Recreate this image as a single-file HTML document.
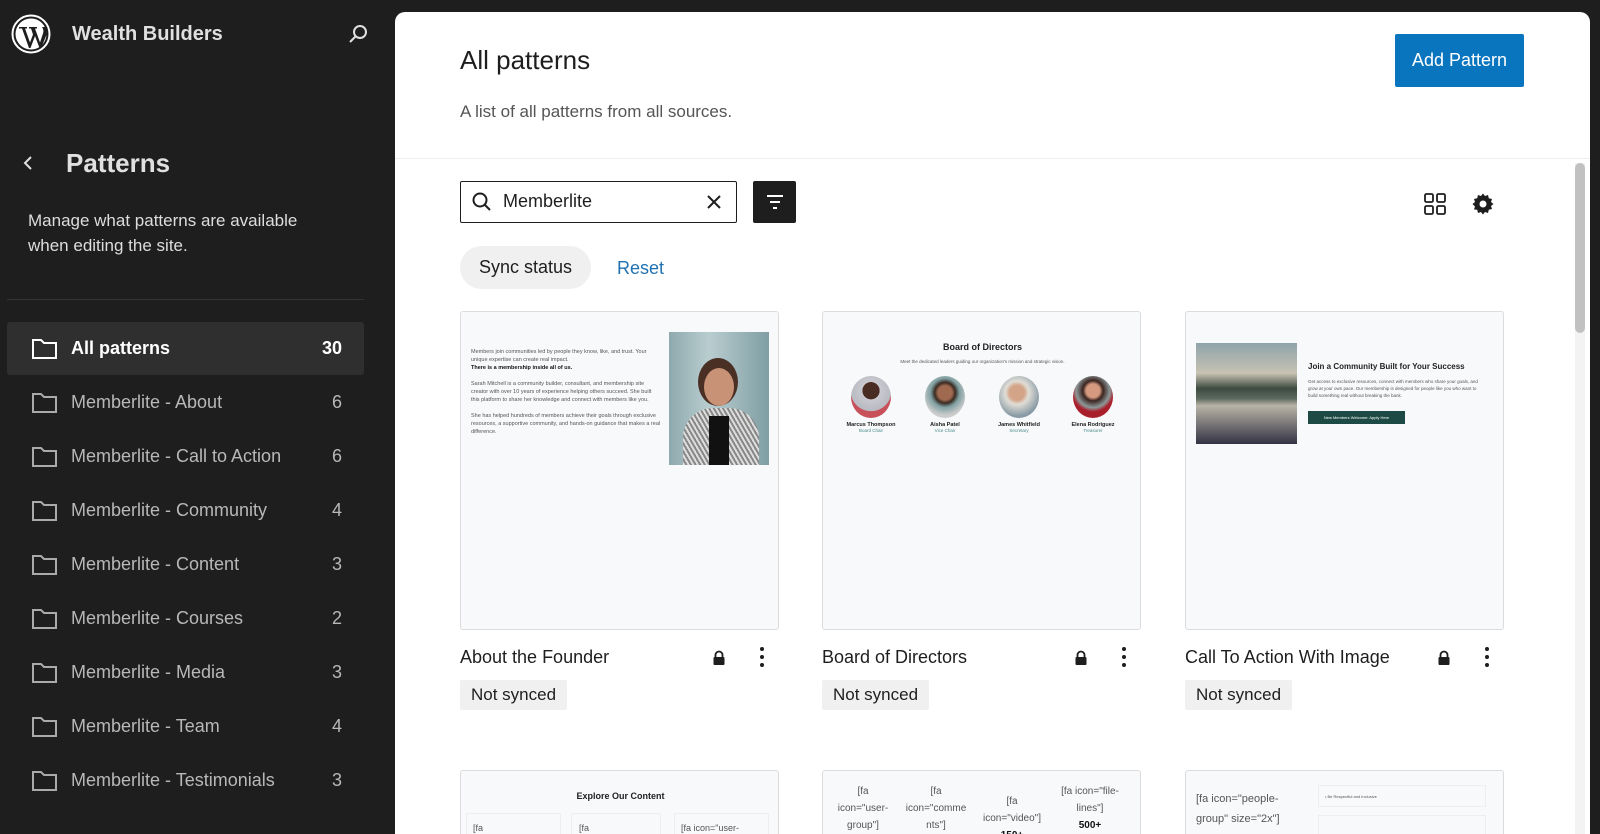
<!DOCTYPE html>
<html><head><meta charset="utf-8"><style>
*{box-sizing:border-box;margin:0;padding:0}
html,body{width:1600px;height:834px;overflow:hidden}
body{background:#1e1e1e;font-family:"Liberation Sans",sans-serif;position:relative}
.a{position:absolute}
.side{color:#e0e0e0}
.item{position:absolute;left:7px;width:357px;height:53px;border-radius:3px;display:flex;align-items:center;color:#b8b8b8;font-size:18px}
.item svg{position:absolute;left:24px}
.item .t{position:absolute;left:64px}
.item .c{position:absolute;right:22px}
.item.on{background:#2f2f2f;color:#fff;font-weight:bold}
.main{position:absolute;left:395px;top:12px;width:1195px;height:822px;background:#fff;border-radius:10px 10px 0 0;overflow:hidden}
.card{position:absolute;width:319px;height:319px;background:#f8f9fb;border:1px solid #dcdcde;border-radius:3px;overflow:hidden}
.card.r2{height:64px;border-bottom:none;border-radius:3px 3px 0 0}
.ttl{position:absolute;font-size:18px;color:#1e1e1e}
.pill{position:absolute;height:30px;background:#f0f0f0;border-radius:2px;font-size:17px;color:#1e1e1e;padding:0 11px;line-height:30px}
.tiny{font-size:5px;color:#555;line-height:8px}
</style></head><body>
<svg class="a" style="left:11px;top:14px" width="40" height="40" viewBox="0 0 40 40"><circle cx="20" cy="20" r="18.5" fill="none" stroke="#fff" stroke-width="2"/><circle cx="20" cy="20" r="15.5" fill="#fff"/><path d="M8 13h8v1.5h-2l5 14 3-8-2-6h-2V13h8v1.5h-2l5 14 3-9c1-3 0-5-1-6.5h4c1.5 2 1.5 5 .5 8l-5.5 13h-1.5l-4.5-12-4.5 12h-1.5L11 14.5H8z" fill="#1e1e1e"/></svg>
<div class="a side" style="left:72px;top:23px;font-size:20px;font-weight:bold">Wealth Builders</div>
<svg class="a" style="left:346px;top:22px" width="24" height="24" viewBox="0 0 24 24"><circle cx="14" cy="10" r="6" fill="none" stroke="#e0e0e0" stroke-width="2"/><path d="M9.5 14.5L4 20" stroke="#e0e0e0" stroke-width="2"/></svg>
<svg class="a" style="left:20px;top:154px" width="18" height="18" viewBox="0 0 18 18"><path d="M11 3L5 9l6 6" fill="none" stroke="#e0e0e0" stroke-width="2"/></svg>
<div class="a side" style="left:66px;top:148px;font-size:26px;font-weight:bold">Patterns</div>
<div class="a side" style="left:28px;top:208px;font-size:17px;line-height:25px;color:#ddd">Manage what patterns are available<br>when editing the site.</div>
<div class="a" style="left:7px;top:299px;width:357px;height:1px;background:#333"></div>
<div class="item on" style="top:322px"><svg width="27" height="24" viewBox="0 0 27 24"><path d="M2 3h8l3 3h12v15H2z" fill="none" stroke="#fff" stroke-width="2"/></svg><span class="t">All patterns</span><span class="c">30</span></div>
<div class="item" style="top:376px"><svg width="27" height="24" viewBox="0 0 27 24"><path d="M2 3h8l3 3h12v15H2z" fill="none" stroke="#aaa" stroke-width="2"/></svg><span class="t">Memberlite - About</span><span class="c">6</span></div>
<div class="item" style="top:430px"><svg width="27" height="24" viewBox="0 0 27 24"><path d="M2 3h8l3 3h12v15H2z" fill="none" stroke="#aaa" stroke-width="2"/></svg><span class="t">Memberlite - Call to Action</span><span class="c">6</span></div>
<div class="item" style="top:484px"><svg width="27" height="24" viewBox="0 0 27 24"><path d="M2 3h8l3 3h12v15H2z" fill="none" stroke="#aaa" stroke-width="2"/></svg><span class="t">Memberlite - Community</span><span class="c">4</span></div>
<div class="item" style="top:538px"><svg width="27" height="24" viewBox="0 0 27 24"><path d="M2 3h8l3 3h12v15H2z" fill="none" stroke="#aaa" stroke-width="2"/></svg><span class="t">Memberlite - Content</span><span class="c">3</span></div>
<div class="item" style="top:592px"><svg width="27" height="24" viewBox="0 0 27 24"><path d="M2 3h8l3 3h12v15H2z" fill="none" stroke="#aaa" stroke-width="2"/></svg><span class="t">Memberlite - Courses</span><span class="c">2</span></div>
<div class="item" style="top:646px"><svg width="27" height="24" viewBox="0 0 27 24"><path d="M2 3h8l3 3h12v15H2z" fill="none" stroke="#aaa" stroke-width="2"/></svg><span class="t">Memberlite - Media</span><span class="c">3</span></div>
<div class="item" style="top:700px"><svg width="27" height="24" viewBox="0 0 27 24"><path d="M2 3h8l3 3h12v15H2z" fill="none" stroke="#aaa" stroke-width="2"/></svg><span class="t">Memberlite - Team</span><span class="c">4</span></div>
<div class="item" style="top:754px"><svg width="27" height="24" viewBox="0 0 27 24"><path d="M2 3h8l3 3h12v15H2z" fill="none" stroke="#aaa" stroke-width="2"/></svg><span class="t">Memberlite - Testimonials</span><span class="c">3</span></div>

<div class="main">
<div class="a" style="left:65px;top:33px;font-size:26px;color:#1e1e1e">All patterns</div>
<div class="a" style="left:65px;top:90px;font-size:17px;color:#555">A list of all patterns from all sources.</div>
<div class="a" style="left:1000px;top:22px;width:129px;height:53px;background:#0a75bf;border-radius:2px;color:#fff;font-size:18px;text-align:center;line-height:53px">Add Pattern</div>
<div class="a" style="left:0;top:146px;width:1195px;height:1px;background:#eee"></div>
<div class="a" style="left:1180px;top:151px;width:10px;height:671px;background:#f3f3f3"></div>
<div class="a" style="left:1180px;top:151px;width:10px;height:170px;background:#c1c1c1;border-radius:5px"></div>

<div class="a" style="left:65px;top:169px;width:277px;height:42px;border:1px solid #1e1e1e;border-radius:2px"></div>
<svg class="a" style="left:75px;top:178px" width="24" height="24" viewBox="0 0 24 24"><circle cx="10" cy="10" r="6.5" fill="none" stroke="#1e1e1e" stroke-width="2"/><path d="M15 15l5 5" stroke="#1e1e1e" stroke-width="2"/></svg>
<div class="a" style="left:108px;top:179px;font-size:18px;color:#1e1e1e">Memberlite</div>
<svg class="a" style="left:309px;top:180px" width="20" height="20" viewBox="0 0 20 20"><path d="M4 4l12 12M16 4L4 16" stroke="#1e1e1e" stroke-width="2"/></svg>
<div class="a" style="left:358px;top:169px;width:43px;height:42px;background:#1e1e1e;border-radius:2px"></div>
<svg class="a" style="left:369px;top:179px" width="22" height="22" viewBox="0 0 22 22"><path d="M3 5h16M6 11h10M9 17h4" stroke="#fff" stroke-width="2"/></svg>
<svg class="a" style="left:1028px;top:180px" width="24" height="24" viewBox="0 0 24 24" fill="none" stroke="#1e1e1e" stroke-width="1.8"><rect x="2" y="2" width="8" height="8" rx="1.5"/><rect x="14" y="2" width="8" height="8" rx="1.5"/><rect x="2" y="14" width="8" height="8" rx="1.5"/><rect x="14" y="14" width="8" height="8" rx="1.5"/></svg>
<svg class="a" style="left:1076px;top:180px" width="24" height="24" viewBox="0 0 24 24"><path d="M12 1.5l2 2.5 3-1 .8 3.2 3.2.8-1 3 2.5 2-2.5 2 1 3-3.2.8-.8 3.2-3-1-2 2.5-2-2.5-3 1-.8-3.2L3 17.5l1-3L1.5 12 4 10 3 7l3.2-.8L7 3l3 1z" fill="#1e1e1e"/><circle cx="12" cy="12" r="3.5" fill="#fff"/></svg>

<div class="a" style="left:65px;top:234px;width:131px;height:43px;background:#f0f0f0;border-radius:22px;font-size:18px;color:#1e1e1e;text-align:center;line-height:43px">Sync status</div>
<div class="a" style="left:222px;top:246px;font-size:18px;color:#2271b1">Reset</div>

<div class="card" style="left:65px;top:299px">
 <div class="a tiny" style="left:10px;top:36px;width:190px;font-size:5.5px">Members join communities led by people they know, like, and trust. Your unique expertise can create real impact.<br><b style="color:#111">There is a membership inside all of us.</b><br><br>Sarah Mitchell is a community builder, consultant, and membership site creator with over 10 years of experience helping others succeed. She built this platform to share her knowledge and connect with members like you.<br><br>She has helped hundreds of members achieve their goals through exclusive resources, a supportive community, and hands-on guidance that makes a real difference.</div>
 <div class="a" style="left:208px;top:20px;width:100px;height:133px;background:linear-gradient(90deg,#8ea9ad,#b9cdd0 40%,#7f9ea3)"></div>
 <div class="a" style="left:237px;top:46px;width:40px;height:48px;border-radius:50%;background:#4a3024"></div>
 <div class="a" style="left:243px;top:56px;width:30px;height:38px;border-radius:50%;background:#c79276"></div>
 <div class="a" style="left:222px;top:96px;width:76px;height:57px;border-radius:30px 30px 0 0;background:repeating-linear-gradient(60deg,#ddd 0 2px,#888 2px 4px)"></div>
 <div class="a" style="left:248px;top:104px;width:20px;height:49px;background:#111"></div>
</div>
<div class="ttl" style="left:65px;top:635px">About the Founder</div>
<div class="pill" style="left:65px;top:668px">Not synced</div>

<div class="card" style="left:427px;top:299px">
 <div class="a" style="left:0;top:30px;width:319px;text-align:center;font-size:9px;font-weight:bold;color:#222">Board of Directors</div>
 <div class="a tiny" style="left:0;top:46px;width:319px;text-align:center;font-size:4.5px">Meet the dedicated leaders guiding our organization's mission and strategic vision.</div>
 <div class="a" style="left:28px;top:64px;width:40px;height:42px;border-radius:50%;background:radial-gradient(circle at 50% 35%,#4a2d22 25%,#c9c9cf 26%,#b9bac2 60%,#c7505a 61%)"></div>
 <div class="a" style="left:102px;top:64px;width:40px;height:42px;border-radius:50%;background:radial-gradient(circle at 50% 40%,#a06a50 22%,#3a2a22 32%,#7fa0a2 45%,#ccc 70%)"></div>
 <div class="a" style="left:176px;top:64px;width:40px;height:42px;border-radius:50%;background:radial-gradient(circle at 45% 40%,#d3a487 22%,#e0ddd6 35%,#889aa5 70%)"></div>
 <div class="a" style="left:250px;top:64px;width:40px;height:42px;border-radius:50%;background:radial-gradient(circle at 50% 35%,#d59a80 20%,#3b2420 30%,#8d9999 50%,#a8202c 62%)"></div>
 <div class="a" style="left:8px;top:110px;width:80px;text-align:center;font-size:5.5px;font-weight:bold;color:#222">Marcus Thompson<br><span style="font-weight:normal;color:#4a8a8a;font-size:4.5px">Board Chair</span></div>
 <div class="a" style="left:82px;top:110px;width:80px;text-align:center;font-size:5.5px;font-weight:bold;color:#222">Aisha Patel<br><span style="font-weight:normal;color:#4a8a8a;font-size:4.5px">Vice Chair</span></div>
 <div class="a" style="left:156px;top:110px;width:80px;text-align:center;font-size:5.5px;font-weight:bold;color:#222">James Whitfield<br><span style="font-weight:normal;color:#4a8a8a;font-size:4.5px">Secretary</span></div>
 <div class="a" style="left:230px;top:110px;width:80px;text-align:center;font-size:5.5px;font-weight:bold;color:#222">Elena Rodriguez<br><span style="font-weight:normal;color:#4a8a8a;font-size:4.5px">Treasurer</span></div>
</div>
<div class="ttl" style="left:427px;top:635px">Board of Directors</div>
<div class="pill" style="left:427px;top:668px">Not synced</div>

<div class="card" style="left:790px;top:299px">
 <div class="a" style="left:10px;top:31px;width:101px;height:101px;background:linear-gradient(180deg,#8fa3ab 0,#c7c2b2 30%,#3d4a3f 45%,#5d6a5e 55%,#b8b4a6 62%,#334 100%)"></div>
 <div class="a" style="left:122px;top:50px;font-size:8px;font-weight:bold;color:#222">Join a Community Built for Your Success</div>
 <div class="a tiny" style="left:122px;top:66px;width:170px;font-size:4.5px;line-height:7px">Get access to exclusive resources, connect with members who share your goals, and grow at your own pace. Our membership is designed for people like you who want to build something real without breaking the bank.</div>
 <div class="a" style="left:122px;top:99px;width:97px;height:13px;background:#1d4a44;color:#fff;font-size:4px;text-align:center;line-height:13px">New Members Welcome: Apply Here</div>
</div>
<div class="ttl" style="left:790px;top:635px">Call To Action With Image</div>
<div class="pill" style="left:790px;top:668px">Not synced</div>

<svg class="a" style="left:317px;top:638px" width="14" height="16" viewBox="0 0 14 16"><path d="M3.5 7V5a3.5 3.5 0 017 0v2" fill="none" stroke="#1e1e1e" stroke-width="1.8"/><rect x="1.5" y="7" width="11" height="8" rx="1" fill="#1e1e1e"/></svg>
<svg class="a" style="left:679px;top:638px" width="14" height="16" viewBox="0 0 14 16"><path d="M3.5 7V5a3.5 3.5 0 017 0v2" fill="none" stroke="#1e1e1e" stroke-width="1.8"/><rect x="1.5" y="7" width="11" height="8" rx="1" fill="#1e1e1e"/></svg>
<svg class="a" style="left:1042px;top:638px" width="14" height="16" viewBox="0 0 14 16"><path d="M3.5 7V5a3.5 3.5 0 017 0v2" fill="none" stroke="#1e1e1e" stroke-width="1.8"/><rect x="1.5" y="7" width="11" height="8" rx="1" fill="#1e1e1e"/></svg>
<svg class="a" style="left:364px;top:634px" width="6" height="22" viewBox="0 0 6 22" fill="#1e1e1e"><circle cx="3" cy="3" r="2"/><circle cx="3" cy="11" r="2"/><circle cx="3" cy="19" r="2"/></svg>
<svg class="a" style="left:726px;top:634px" width="6" height="22" viewBox="0 0 6 22" fill="#1e1e1e"><circle cx="3" cy="3" r="2"/><circle cx="3" cy="11" r="2"/><circle cx="3" cy="19" r="2"/></svg>
<svg class="a" style="left:1089px;top:634px" width="6" height="22" viewBox="0 0 6 22" fill="#1e1e1e"><circle cx="3" cy="3" r="2"/><circle cx="3" cy="11" r="2"/><circle cx="3" cy="19" r="2"/></svg>

<div class="card r2" style="left:65px;top:758px">
 <div class="a" style="left:0;top:20px;width:319px;text-align:center;font-size:9px;font-weight:bold;color:#222">Explore Our Content</div>
 <div class="a" style="left:5px;top:42px;width:95px;height:40px;border:1px solid #eee"></div>
 <div class="a" style="left:110px;top:42px;width:90px;height:40px;border:1px solid #eee"></div>
 <div class="a" style="left:213px;top:42px;width:95px;height:40px;border:1px solid #eee"></div>
 <div class="a" style="left:12px;top:52px;font-size:9px;color:#555">[fa</div>
 <div class="a" style="left:118px;top:52px;font-size:9px;color:#555">[fa</div>
 <div class="a" style="left:220px;top:52px;font-size:9px;color:#555">[fa icon="user-</div>
</div>
<div class="card r2" style="left:427px;top:758px">
 <div class="a" style="left:10px;top:12px;width:60px;text-align:center;font-size:10px;color:#555;line-height:17px">[fa<br>icon="user-<br>group"]</div>
 <div class="a" style="left:82px;top:12px;width:62px;text-align:center;font-size:10px;color:#555;line-height:17px">[fa<br>icon="comme<br>nts"]</div>
 <div class="a" style="left:158px;top:22px;width:62px;text-align:center;font-size:10px;color:#555;line-height:17px">[fa<br>icon="video"]<br><b style="color:#111">150+</b></div>
 <div class="a" style="left:232px;top:12px;width:70px;text-align:center;font-size:10px;color:#555;line-height:17px">[fa icon="file-<br>lines"]<br><b style="color:#111">500+</b></div>
</div>
<div class="card r2" style="left:790px;top:758px">
 <div class="a" style="left:10px;top:18px;font-size:11px;color:#555;line-height:20px">[fa icon="people-<br>group" size="2x"]</div>
 <div class="a" style="left:132px;top:14px;width:168px;height:22px;border:1px solid #eee;font-size:4px;padding:8px 6px;color:#555">• Be Respectful and Inclusive</div>
 <div class="a" style="left:132px;top:44px;width:168px;height:22px;border:1px solid #eee"></div>
</div>
</div>
</body></html>
